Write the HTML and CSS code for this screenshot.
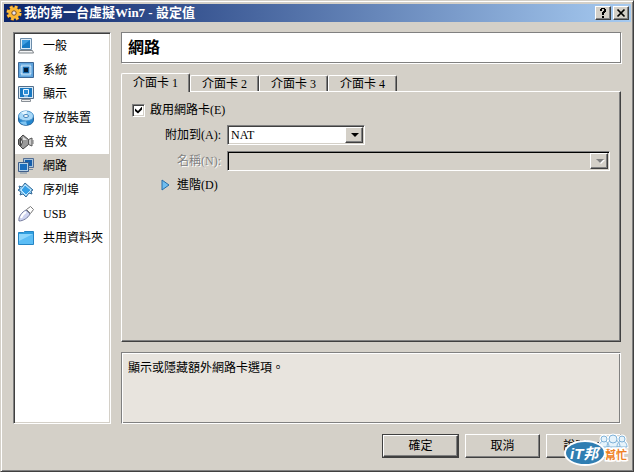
FILE: index.html
```html
<!DOCTYPE html>
<html lang="zh-Hant">
<head>
<meta charset="utf-8">
<title>我的第一台虛擬Win7 - 設定值</title>
<link rel="stylesheet" href="styles.css">
</head>
<body>
<div class="window">
  <header class="titlebar">
    <svg class="title-icon" viewBox="0 0 16 16" aria-hidden="true">
      <circle cx="8" cy="8" r="6" fill="none" stroke="#a85b0c" stroke-width="3.6" stroke-dasharray="2.8 1.91"/>
      <circle cx="8" cy="8" r="6" fill="none" stroke="#ffc64a" stroke-width="2.6" stroke-dasharray="2.6 2.11"/>
      <circle cx="8" cy="8" r="4" fill="none" stroke="#fbb733" stroke-width="3.4"/>
      <circle cx="8" cy="8" r="2.2" fill="#e8e4f0" stroke="#8a5a20"/>
    </svg>
    <h1 class="title-text">我的第一台虛擬Win7 - 設定值</h1>
    <button class="caption-button" type="button" aria-label="說明">
      <svg viewBox="0 0 10 10" width="10" height="10"><path d="M2 3V1h1V0h4v1h1v3H7v1H6v2H4V4h1V3h1V1H4v2zM4 8h2v2H4z" fill="#000"/></svg>
    </button>
    <button class="caption-button" type="button" aria-label="關閉">
      <svg viewBox="0 0 10 10" width="10" height="10"><path d="M1.5 1.5l7 7M8.5 1.5l-7 7" stroke="#000" stroke-width="1.7"/></svg>
    </button>
  </header>

  <div class="content">
    <nav class="sidebar">
      <a class="nav-item" href="#general"><svg class="icon" viewBox="0 0 16 16"><path d="M2.5.5h11v11h-11z" fill="#dcebf7" stroke="#6b8caa"/><path d="M4 2h8v8H4z" fill="#1679c4"/><path d="M4 2h8L4 8z" fill="#3f9de0"/><path d="M1.500 12.500h13l1 2.500H.5z" fill="#f4f5f6" stroke="#7d8388"/></svg>一般</a>
      <a class="nav-item" href="#system"><svg class="icon" viewBox="0 0 16 16"><path d="M.5.5h15v15H.5z" fill="#5ea3dd" stroke="#3c6796"/><path d="M3.500 3.500h9v9h-9z" fill="none" stroke="#e8f6ff" stroke-width="2" stroke-dasharray="1 1"/><path d="M5 5h6v6H5z" fill="#1969ac"/><path d="M6 6h4v4H6z" fill="#051d38"/></svg>系統</a>
      <a class="nav-item" href="#display"><svg class="icon" viewBox="0 0 16 16"><path d="M.5.5h15v12H.5z" fill="#d9e9f5" stroke="#54708c"/><path d="M2 2h12v9H2z" fill="#1979c2"/><path d="M5.500 3.500h5v5h-5z" fill="#2f8fd6" stroke="#e8f5ff"/><path d="M6 10h4" stroke="#e8f5ff"/><path d="M3.500 13.500h9v2h-9z" fill="#eee" stroke="#888f96"/></svg>顯示</a>
      <a class="nav-item" href="#storage"><svg class="icon" viewBox="0 0 16 16"><path d="M.5 6v4c0 7 15 7 15 0V6z" fill="#2387d0" stroke="#28659b"/><path d="M2 12c2 3 5 3 7 3l-1-4z" fill="#7fc4f2"/><ellipse cx="8" cy="6" rx="7.5" ry="5" fill="#a8d8f8" stroke="#4b93ca"/><path d="M8 6L3 2.500C5 1 8 1 9 1z" fill="#e6f6ff"/><ellipse cx="8" cy="6" rx="2.5" ry="1.5" fill="#fff" stroke="#3e80b8"/></svg>存放裝置</a>
      <a class="nav-item" href="#audio"><svg class="icon" viewBox="0 0 16 16"><path d="M.5 5.500l2-2v9l-2-2z" fill="#777" stroke="#444"/><path d="M2.500 3.500L5 1l5.500 4.500v5L5 15l-2.500-2.500 2-4.500z" fill="#9b9b9b" stroke="#444"/><path d="M5 3l4 3H5z" fill="#e2e2e2"/><path d="M10.500 5.500L14 4v8l-3.500-1.500z" fill="#ccc" stroke="#555"/><path d="M15 6v4" stroke="#777"/></svg>音效</a>
      <a class="nav-item selected" href="#network"><svg class="icon" viewBox="0 0 16 16"><path d="M5.500.5h10v9h-10z" fill="#a7c3da" stroke="#536e95"/><path d="M7 2h7v6H7z" fill="#155eab"/><path d="M11 11.500h4" stroke="#718aa3"/><path d="M.5 4.500h10v9H.5z" fill="#b5d1e7" stroke="#405f8b"/><path d="M2 6h7v6H2z" fill="#1b6dbd"/><path d="M2 15h7" stroke="#718aa3"/></svg>網路</a>
      <a class="nav-item" href="#serial"><svg class="icon" viewBox="0 0 16 16"><path d="M1 4l3 1 3-4 8 7-2 1 1 3-3-1-3 4-3-3-3 1 1-3-3-2 2-1z" fill="#8dcff8" stroke="#376b98"/><path d="M7 3l6 5-5 5-5-5z" fill="#35a0e8" stroke="#c8eafd"/></svg>序列埠</a>
      <a class="nav-item" href="#usb"><svg class="icon" viewBox="0 0 16 16"><path d="M1 15c-1-4 3-9 7-11l4 4c-2 4-7 7-11 7z" fill="#ced3f0" stroke="#747b9d"/><path d="M3 12c1-3 3-5 5-6" fill="none" stroke="#fff" stroke-width="2"/><path d="M8.500 3.500l4-3 3 3-3 4z" fill="#fff" stroke="#777"/></svg>USB</a>
      <a class="nav-item" href="#shared"><svg class="icon" viewBox="0 0 16 16"><path d="M.5 14.500v-12h5l1-1h9v13z" fill="#2f9fe0" stroke="#2585c5"/><path d="M1 4h14v10H1z" fill="#5bbdf5"/><path d="M1 4h14L1 11z" fill="#8cd6fc"/></svg>共用資料夾</a>
    </nav>

    <main class="main">
      <h2 class="page-title">網路</h2>
      <section class="tabs">
        <div class="tablist" role="tablist">
          <button class="tab active" type="button" role="tab" aria-selected="true">介面卡 1</button>
          <button class="tab" type="button" role="tab" aria-selected="false">介面卡 2</button>
          <button class="tab" type="button" role="tab" aria-selected="false">介面卡 3</button>
          <button class="tab" type="button" role="tab" aria-selected="false">介面卡 4</button>
        </div>
        <div class="panel" role="tabpanel">
          <label class="check-row"><input class="checkbox" type="checkbox" checked>啟用網路卡(E)</label>
          <div class="fields">
            <label class="field-label" for="attached">附加到(A):</label>
            <div class="combo combo-short">
              <select class="select" id="attached"><option>NAT</option></select>
            </div>
            <label class="field-label disabled" for="name">名稱(N):</label>
            <div class="combo combo-disabled">
              <select class="select" id="name" disabled><option></option></select>
            </div>
          </div>
          <button class="advanced" type="button"><svg viewBox="0 0 9 12" width="9" height="12"><path d="M1 1l7 5-7 5z" fill="#6fbdf0" stroke="#276da8"/></svg>進階(D)</button>
        </div>
      </section>
      <p class="description">顯示或隱藏額外網路卡選項。</p>
    </main>
  </div>

  <footer class="actions">
    <button class="button default" type="button">確定</button>
    <button class="button" type="button">取消</button>
    <button class="button" type="button">說明(H)</button>
  </footer>

  <svg class="watermark" viewBox="0 0 70 36" role="img" aria-label="iT邦幫忙">
    <g fill="#d9edf8" stroke="#fff" stroke-width="3"><path d="M37 14c0-8 10-8 10 0zM45 14c0-10 13-10 13 0zM55 14c0-8 10-8 10 0z"/><circle cx="42" cy="6" r="3"/><circle cx="51" cy="6" r="4"/><circle cx="60" cy="6" r="3"/></g>
    <g fill="#e6f3fb" stroke="#7fb2d8"><path d="M37 14c0-8 10-8 10 0zM55 14c0-8 10-8 10 0zM45 14c0-10 13-10 13 0z"/><circle cx="42" cy="6" r="3"/><circle cx="60" cy="6" r="3"/><circle cx="51" cy="6" r="4"/></g>
    <ellipse cx="23" cy="20" rx="20" ry="12" fill="#307eb2" stroke="#fff" stroke-width="2"/>
    <text class="mark-it" x="8" y="26">iT邦</text>
    <text class="mark-help" x="43" y="26">幫忙</text>
  </svg>
</div>
</body>
</html>
```
FILE: styles.css
```css
* { box-sizing: border-box; }

body {
  margin: 0;
  background: #d4d0c8;
  color: #000;
  font: 12px/16px "Liberation Serif", "Noto Sans CJK TC", serif;
}

button, select, input { margin: 0; padding: 0; font: inherit; color: inherit; border-radius: 0; }

.window {
  position: relative;
  display: flex;
  flex-direction: column;
  min-height: 100vh;
  padding: 2px;
  background: #d4d0c8;
  border: 1px solid;
  border-color: #d4d0c8 #404040 #404040 #d4d0c8;
  box-shadow: inset 1px 1px #fff, inset -1px -1px #808080;
}

.titlebar {
  display: flex;
  align-items: center;
  gap: 2px;
  height: 18px;
  margin: 1px 0 0 1px;
  padding: 0 2px;
  background: linear-gradient(90deg, #0a246a, #a6caf0);
}

.title-icon { width: 16px; height: 16px; }

.title-text { flex: 1; margin: 0; color: #fff; font-size: 13px; line-height: 18px; }

.caption-button {
  display: grid;
  place-items: center;
  width: 16px;
  height: 14px;
  background: #d4d0c8;
  border: 1px solid;
  border-color: #fff #404040 #404040 #fff;
  box-shadow: inset -1px -1px #808080;
}

.content { display: flex; flex: 1; gap: 10px; padding: 10px 10px 0; }

.sidebar {
  width: 98px;
  padding: 1px;
  background: #fff;
  border: 1px solid;
  border-color: #808080 #fff #fff #808080;
  box-shadow: inset 1px 1px #404040, inset -1px -1px #d4d0c8;
}

.nav-item {
  display: flex;
  align-items: center;
  gap: 9px;
  height: 24px;
  padding-left: 3px;
  color: inherit;
  text-decoration: none;
  white-space: nowrap;
}

.nav-item.selected { background: #d4d0c8; }

.icon { width: 16px; height: 16px; flex: none; }

.main { display: flex; flex: 1; flex-direction: column; gap: 10px; min-width: 0; }

.page-title {
  margin: 0;
  padding: 3px 6px;
  background: #fff;
  border: 1px solid #808080;
  box-shadow: 1px 1px #fff;
  font-size: 16px;
  line-height: 23px;
}

.tabs { display: flex; flex: 1; flex-direction: column; }

.tablist { display: flex; align-items: flex-end; }

.tab {
  width: 69px;
  height: 16px;
  background: #d4d0c8;
  border: solid;
  border-width: 1px 1px 0;
  border-color: #fff #404040 #fff #fff;
  border-radius: 2px 2px 0 0;
  box-shadow: inset -1px 0 #808080;
}

.tab.active { position: relative; z-index: 1; height: 19px; margin-bottom: -1px; }

.panel {
  flex: 1;
  padding: 10px;
  border: 1px solid;
  border-color: #fff #404040 #404040 #fff;
  box-shadow: inset -1px -1px #808080;
}

.check-row { display: flex; align-items: center; gap: 5px; width: max-content; }

.checkbox {
  appearance: none;
  display: grid;
  place-items: center;
  width: 13px;
  height: 13px;
  background: #fff;
  border: 1px solid;
  border-color: #808080 #fff #fff #808080;
  box-shadow: inset 1px 1px #404040, inset -1px -1px #d4d0c8;
}

.checkbox:checked::before {
  content: "";
  width: 7px;
  height: 7px;
  background: #000;
  clip-path: polygon(0 29%, 43% 65%, 100% 0, 100% 42%, 43% 100%, 0 65%);
}

.fields {
  display: grid;
  grid-template-columns: 89px 1fr;
  gap: 6px;
  align-items: center;
  margin-top: 7px;
}

.field-label { text-align: right; white-space: nowrap; }

.field-label.disabled { color: #808080; text-shadow: 1px 1px #fff; }

.combo {
  position: relative;
  height: 20px;
  padding: 1px;
  background: #fff;
  border: 1px solid;
  border-color: #808080 #fff #fff #808080;
  box-shadow: inset 1px 1px #404040, inset -1px -1px #d4d0c8;
}

.combo-short { width: 138px; }

.select {
  appearance: none;
  display: block;
  width: 100%;
  height: 16px;
  padding-left: 2px;
  background: transparent;
  border: 0;
}

.combo::before {
  content: "";
  position: absolute;
  inset: 1px 1px 1px auto;
  width: 16px;
  background: #d4d0c8;
  border: 1px solid;
  border-color: #fff #404040 #404040 #fff;
  box-shadow: inset -1px -1px #808080;
  pointer-events: none;
}

.combo::after {
  content: "";
  position: absolute;
  top: 7px;
  right: 5px;
  border: 4px solid transparent;
  border-top-color: #000;
  border-bottom: 0;
  pointer-events: none;
}

.combo-disabled { background: #d4d0c8; box-shadow: inset 1px 1px #000; }

.combo-disabled::after { border-top-color: #808080; filter: drop-shadow(1px 1px #fff); }

.advanced {
  display: flex;
  align-items: center;
  gap: 7px;
  margin: 6px 0 0 29px;
  background: transparent;
  border: 0;
}

.description {
  height: 72px;
  margin: 0;
  padding: 7px 6px;
  background: #e8e4de;
  border: 1px solid;
  border-color: #808080 #fff #fff #808080;
  box-shadow: inset 1px 1px #fff, inset -1px -1px #808080;
}

.actions { display: flex; justify-content: flex-end; gap: 6px; padding: 10px 10px 11px; }

.button {
  width: 75px;
  height: 24px;
  background: #d4d0c8;
  border: 1px solid;
  border-color: #fff #404040 #404040 #fff;
  box-shadow: inset -1px -1px #808080;
}

.button.default { width: 77px; outline: 1px solid #404040; outline-offset: -1px; border-width: 2px; }

.watermark { position: absolute; right: 1px; bottom: 2px; width: 70px; height: 36px; }

.mark-it { fill: #fff; font: italic bold 15px "Liberation Sans", "Noto Sans CJK TC", sans-serif; }

.mark-help {
  fill: #ef8122;
  stroke: #fff;
  stroke-width: 3px;
  paint-order: stroke;
  font: bold 11px "Noto Sans CJK TC", sans-serif;
}
```
